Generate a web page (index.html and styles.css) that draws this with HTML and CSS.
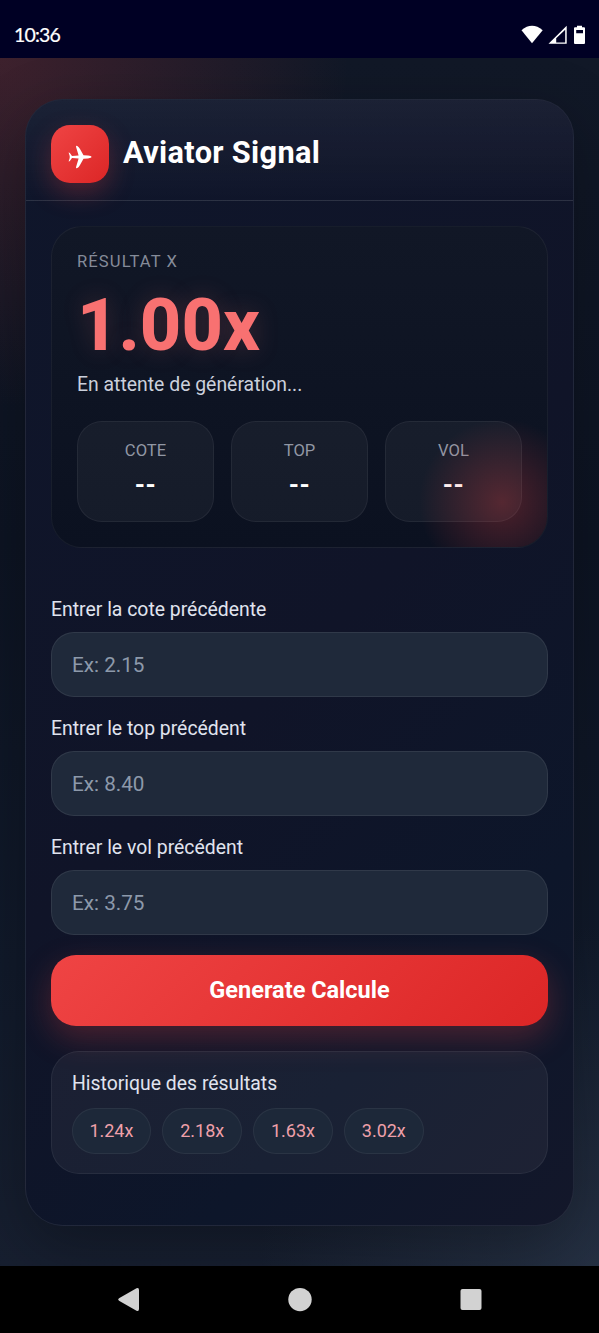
FILE: index.html
```
<!DOCTYPE html>
<html lang="fr">
<head>
<meta charset="utf-8">
<title>Aviator Signal</title>
<link rel="stylesheet" href="styles.css">
</head>
<body>
<div class="statusbar">
  <span class="clock">10:36</span>
  <svg class="status-icons" width="66" height="20" viewBox="0 0 66 20" fill="#fff">
    <path d="M.5 5.2Q11 -3.5 21.7 5.2L11 18.2Z"/>
    <path fill-rule="evenodd" d="M27.5 18.8L45.7 .7V18.8ZM35.2 17.6H44.2V4.8L35.2 13.2Z"/>
    <path fill-rule="evenodd" d="M56 .8h5v1.400h2q1 0 1 1V18q0 1-1 1h-9q-1 0-1-1V3.200q0-1 1-1h2zM55.200 5V8.200H62V5z"/>
  </svg>
</div>
<main class="page">
  <section class="card">
    <header class="header">
      <div class="logo">
        <svg width="24" height="24" viewBox="0 0 24 24" fill="#fff"><path d="M.6 7.600Q1.600 7.600 2.200 8.500L4 11 10.600 10.500 8 1.800Q7.900 .3 9.300 .9 10.800 1.700 12 4L15.500 10.300 20 10.600Q23.500 11 23.700 12 23.500 13 20 13.400L15.500 13.700 12 20Q10.800 22.300 9.300 23.100 7.900 23.700 8 22.200L10.600 13.500 4 13 2.200 15.500Q1.600 16.400 .6 16.400L1.700 12.900V11.100Z"/></svg>
      </div>
      <h1 class="title">Aviator Signal</h1>
    </header>
    <div class="content">
      <div class="result">
        <div class="result-label">RÉSULTAT X</div>
        <div class="result-value">1.00x</div>
        <div class="result-status">En attente de génération...</div>
        <div class="stats">
          <div class="stat"><span class="stat-name">COTE</span><b class="stat-value">--</b></div>
          <div class="stat"><span class="stat-name">TOP</span><b class="stat-value">--</b></div>
          <div class="stat"><span class="stat-name">VOL</span><b class="stat-value">--</b></div>
        </div>
      </div>
      <form class="form">
        <label class="field"><span class="field-name">Entrer la cote précédente</span><input class="input" placeholder="Ex: 2.15"></label>
        <label class="field"><span class="field-name">Entrer le top précédent</span><input class="input" placeholder="Ex: 8.40"></label>
        <label class="field"><span class="field-name">Entrer le vol précédent</span><input class="input" placeholder="Ex: 3.75"></label>
        <button class="generate" type="button">Generate Calcule</button>
      </form>
      <div class="history">
        <div class="history-title">Historique des résultats</div>
        <div class="chips">
          <span class="chip">1.24x</span><span class="chip">2.18x</span><span class="chip">1.63x</span><span class="chip">3.02x</span>
        </div>
      </div>
    </div>
  </section>
</main>
<nav class="navbar">
  <svg width="24" height="26" viewBox="0 0 24 26" fill="#d2d2d2"><path d="M2 11.200L19.500 1.300Q22 .3 22 3V22Q22 24.700 19.500 23.700L2 13.800Q.2 12.500 2 11.200Z"/></svg>
  <svg width="24" height="26" viewBox="0 0 24 26" fill="#d2d2d2"><circle cx="12" cy="12.600" r="11.700"/></svg>
  <svg width="24" height="26" viewBox="0 0 24 26" fill="#d2d2d2"><rect x="1.500" y="2" width="21" height="21" rx="2"/></svg>
</nav>
</body>
</html>
```
FILE: styles.css
```
* { box-sizing: border-box; }
body {
  margin: 0;
  height: 1333px;
  display: flex;
  flex-direction: column;
  overflow: hidden;
  background: #000;
  color: #fff;
  font-family: Roboto, sans-serif;
}
.statusbar {
  height: 58px;
  flex: none;
  display: flex;
  justify-content: space-between;
  align-items: flex-start;
  padding: 25px 12px 0 14px;
  background: #000024;
}
.clock { margin-top: -1px; font: 19.500px/22px Lato, sans-serif; letter-spacing: -.800px; -webkit-text-stroke: .2px #fff; }
.page {
  height: 1208px;
  flex: none;
  padding: 41px 25px;
  background:
    radial-gradient(circle at top left, rgba(239, 68, 68, .2), transparent 350px),
    radial-gradient(circle at bottom right, rgba(51, 65, 85, .5), transparent 340px),
    linear-gradient(180deg, #111827 0%, #0d1423 40%, #111a2b 75%, #171f30 100%);
  overflow: hidden;
}
.card {
  height: 1127px;
  border: 1px solid rgba(255, 255, 255, .08);
  border-radius: 38px;
  background: linear-gradient(135deg, #0f162b, #101428 50%, #0d162a 78%, #13172a);
  box-shadow: 0 20px 64px rgba(0, 0, 0, .3);
  overflow: hidden;
}
.header {
  height: 101px;
  display: flex;
  align-items: center;
  gap: 14px;
  padding: 8px 25px 0;
  border-bottom: 1px solid rgba(255, 255, 255, .08);
  background: linear-gradient(180deg, rgba(255, 255, 255, .05), transparent);
}
.logo {
  width: 58px;
  height: 58px;
  display: grid;
  place-items: center;
  padding-top: 5px;
  border-radius: 19px;
  background: linear-gradient(135deg, #ef4444, #dc2626);
  box-shadow: 0 10px 26px rgba(239, 68, 68, .27);
}
.title { margin: 0 0 3px; font-size: 30.720px; line-height: 38px; font-weight: 700; letter-spacing: .33px; }
.content { padding: 25px 25px 0; }
.result {
  position: relative;
  height: 322px;
  padding: 25px;
  border: 1px solid rgba(255, 255, 255, .05);
  border-radius: 31px;
  background: linear-gradient(180deg, #111726, #0b1120);
  overflow: hidden;
}
.result::after {
  content: "";
  position: absolute;
  right: -39px;
  bottom: -39px;
  width: 168px;
  height: 168px;
  border-radius: 50%;
  background: radial-gradient(circle, rgba(239, 68, 68, .29), transparent 70%);
}
.result-label { font-size: 16.600px; line-height: 20px; letter-spacing: 1.100px; color: #858b99; }
.result-value {
  margin: 13px 0 6px;
  font-size: 72px;
  line-height: 82px;
  font-weight: 800;
  color: #f87171;
  text-shadow: 0 0 26px rgba(248, 113, 113, .2);
}
.result-status { font-size: 19.400px; line-height: 24px; color: #cbd0dc; }
.stats { display: grid; grid-template-columns: repeat(3, 1fr); gap: 17px; margin-top: 24px; }
.stat {
  height: 101px;
  display: flex;
  flex-direction: column;
  align-items: center;
  padding-top: 18px;
  border: 1px solid rgba(255, 255, 255, .06);
  border-radius: 25px;
  background: rgba(255, 255, 255, .045);
}
.stat-name { font-size: 16.600px; line-height: 21px; color: #9197a4; }
.stat-value { margin-top: 10px; font-size: 26px; line-height: 28px; letter-spacing: .5px; }
.form { padding-top: 49px; }
.field { display: block; height: 119px; }
.field-name { display: block; padding-bottom: 10px; font-size: 19.400px; line-height: 25px; color: #e0e4ef; }
.input {
  display: block;
  width: 100%;
  height: 65px;
  padding: 0 20px;
  border: 1px solid rgba(255, 255, 255, .08);
  border-radius: 23px;
  background: #1f293a;
  color: #fff;
  font: 20.700px Roboto, sans-serif;
}
.input::placeholder { color: #8d99aa; }
.generate {
  display: block;
  width: 100%;
  height: 71px;
  margin-top: 1px;
  padding: 0 0 1px;
  border: 0;
  border-radius: 25px;
  background: linear-gradient(135deg, #ef4444, #dc2626);
  box-shadow: 0 12px 32px rgba(239, 68, 68, .27);
  color: #fff;
  font: 700 23.500px Roboto, sans-serif;
}
.history {
  position: relative;
  height: 123px;
  margin-top: 25px;
  padding: 19px 19px 0 20px;
  border: 1px solid rgba(255, 255, 255, .06);
  border-radius: 28px;
  background: rgba(255, 255, 255, .05);
}
.history-title { font-size: 19.400px; line-height: 26px; color: #e0e4ef; }
.chips { display: flex; gap: 11px; margin: 11px 0 0 -.500px; }
.chip {
  width: 79.800px;
  height: 46px;
  border: 1px solid rgba(255, 255, 255, .06);
  border-radius: 23px;
  background: #1d2839;
  color: #efa0aa;
  font-size: 18px;
  line-height: 44px;
  text-align: center;
}
.navbar {
  height: 67px;
  flex: none;
  display: flex;
  justify-content: center;
  gap: 147px;
  padding-top: 21px;
  background: #000;
}
```
